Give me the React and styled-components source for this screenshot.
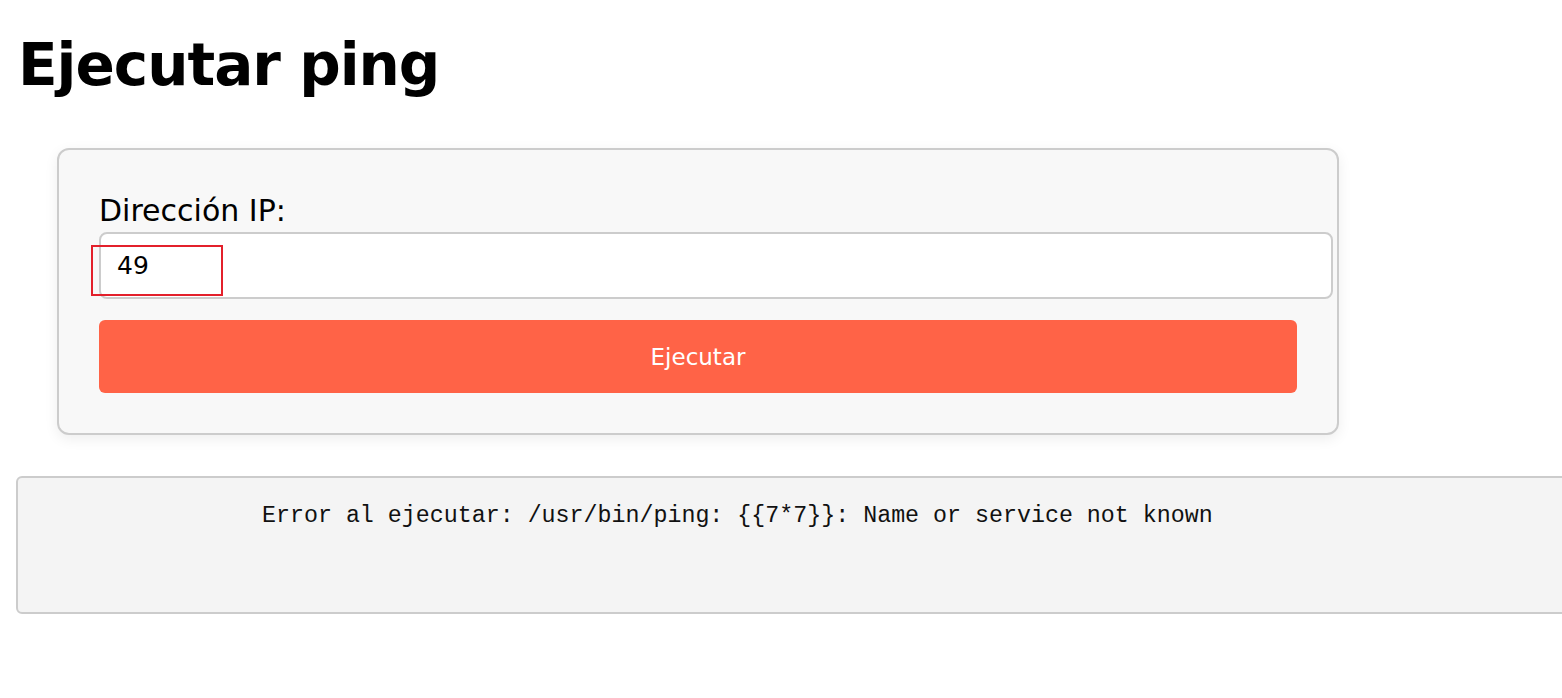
import React, { useState } from "react";
import styled, { createGlobalStyle } from "styled-components";

const GlobalStyle = createGlobalStyle`
  html, body {
    margin: 0;
    padding: 0;
    background: #ffffff;
    overflow: hidden;
  }
  body {
    font-family: "DejaVu Sans", "Noto Sans", sans-serif;
    color: #000;
  }
`;

const Page = styled.div`
  padding: 31px 0 0 16px;
`;

const Title = styled.h1`
  margin: 0 0 49px 2px;
  font-size: 58px;
  line-height: 68px;
  font-weight: 700;
  letter-spacing: -1px;
`;

const Card = styled.form`
  margin-left: 41px;
  width: 1198px;
  padding: 43px 40px 40px;
  background: #f8f8f8;
  border: 2px solid #cccccc;
  border-radius: 12px;
  box-shadow: 0 4px 14px rgba(0, 0, 0, 0.07);
`;

const Label = styled.label`
  display: block;
  font-size: 30px;
  line-height: 36px;
  margin-bottom: 3px;
`;

const InputWrap = styled.div`
  position: relative;
  margin-bottom: 21px;
`;

const Input = styled.input`
  box-sizing: content-box;
  display: block;
  width: 100%;
  padding: 16px;
  border: 2px solid #cccccc;
  border-radius: 8px;
  background: #ffffff;
  font-family: "DejaVu Sans", sans-serif;
  font-size: 25px;
  line-height: 31px;
  height: 31px;
  color: #000;
  outline: none;
`;

const Highlight = styled.div`
  position: absolute;
  left: -8px;
  top: 13px;
  width: 128px;
  height: 47px;
  border: 2px solid #e3202b;
  pointer-events: none;
`;

const Button = styled.button`
  display: block;
  width: 100%;
  height: 73px;
  border: none;
  border-radius: 6px;
  background: #ff6347;
  color: #ffffff;
  font-family: "DejaVu Sans", sans-serif;
  font-size: 23px;
  cursor: pointer;
`;

const Result = styled.div`
  margin-top: 41px;
  width: 1640px;
  height: 134px;
  box-sizing: content-box;
  background: #f4f4f4;
  border: 2px solid #cccccc;
  border-radius: 6px;
`;

const Output = styled.pre`
  margin: 0;
  padding: 24px 0 0 244px;
  font-family: "Liberation Mono", "DejaVu Sans Mono", monospace;
  font-size: 23.3px;
  line-height: 28px;
  color: #111;
`;

export default function App() {
  const [ip, setIp] = useState("49");

  return (
    <Page>
      <GlobalStyle />
      <Title>Ejecutar ping</Title>
      <Card onSubmit={(e) => e.preventDefault()}>
        <Label htmlFor="ip">Dirección IP:</Label>
        <InputWrap>
          <Input id="ip" value={ip} onChange={(e) => setIp(e.target.value)} />
          <Highlight />
        </InputWrap>
        <Button type="submit">Ejecutar</Button>
      </Card>
      <Result>
        <Output>Error al ejecutar: /usr/bin/ping: {"{{7*7}}"}: Name or service not known</Output>
      </Result>
    </Page>
  );
}
